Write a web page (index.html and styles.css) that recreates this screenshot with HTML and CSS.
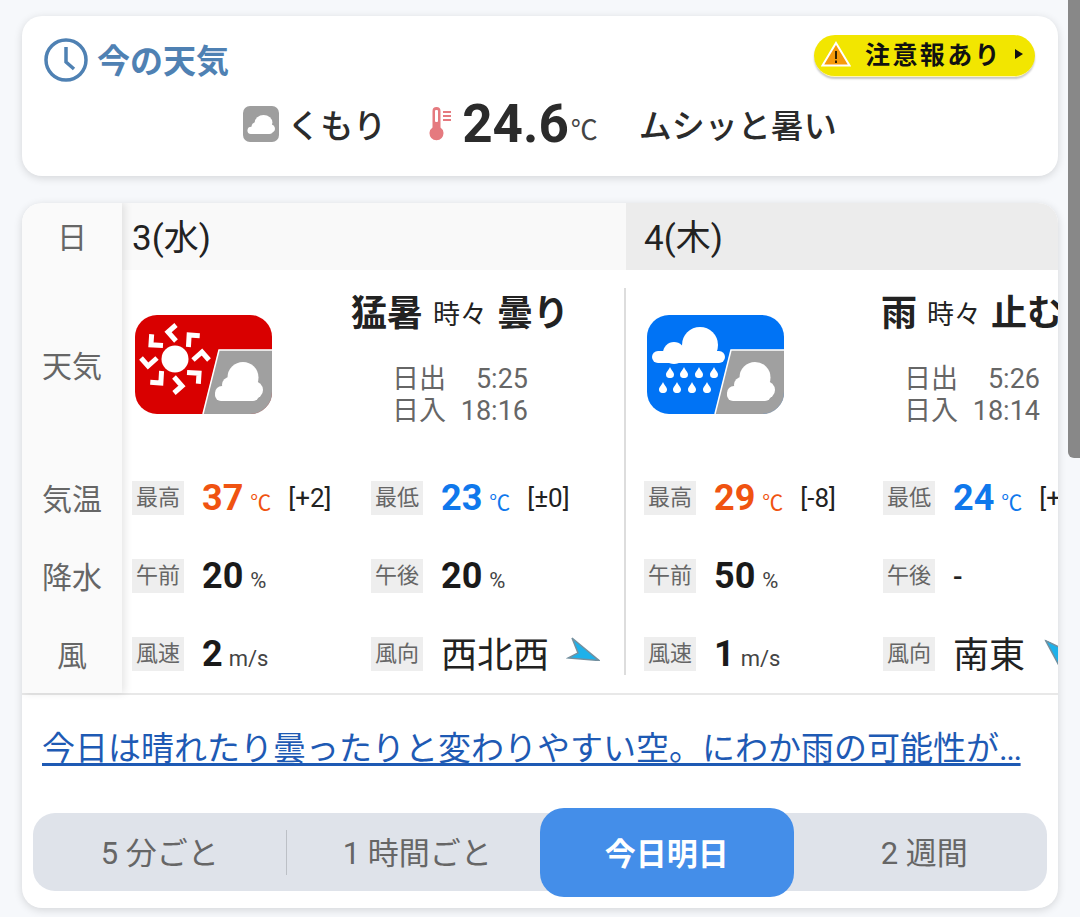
FILE: index.html

```html
<!DOCTYPE html>
<html lang="ja">
<head>
    <meta charset="UTF-8">
    <meta name="viewport" content="width=device-width, initial-scale=1.0">
    <title>今の天気</title>
    <link rel="stylesheet" href="styles.css">
</head>
<body>
    <!-- shared icon parts -->
    <svg class="icon-defs" width="0" height="0" aria-hidden="true">
        <defs>
            <symbol id="small-cloud" viewBox="0 0 49 39" preserveAspectRatio="none">
                <circle cx="29" cy="15.5" r="15.5" fill="#fff"/>
                <circle cx="40" cy="28" r="9" fill="#fff"/>
                <circle cx="16" cy="23" r="8" fill="#fff"/>
                <circle cx="8" cy="31" r="7" fill="#fff"/>
                <rect x="1" y="27" width="44" height="12" rx="6" fill="#fff"/>
            </symbol>
            <symbol id="drop" viewBox="0 0 8 11">
                <path d="M4 0C5 3 8 5 8 7.5A4 3.6 0 0 1 0 7.5C0 5 3 3 4 0Z" fill="#fff"/>
            </symbol>
            <symbol id="wind-arrow" viewBox="0 0 34 24">
                <path d="M6 1L33 23.5L2 21L12 16Z" fill="#1eb1ea" stroke="#74909f" stroke-width="1.5"/>
            </symbol>
        </defs>
    </svg>

    <div class="scrollbar"></div>

    <!-- Current weather -->
    <section class="card now">
        <div class="now-head">
            <h2 class="now-title">
                <svg class="clock" viewBox="0 0 44 44" fill="none" stroke="#4f81b3">
                    <circle cx="22" cy="22" r="20" stroke-width="3.5"/>
                    <path d="M22 9V24L30 31" stroke-width="3.5"/>
                </svg>
                <span class="now-label">今の天気</span>
            </h2>
            <a class="alert" href="#">
                <svg class="alert-mark" viewBox="0 0 30 26">
                    <path d="M15 2L28.5 24.5H1.5Z" fill="#f79a0c" stroke="#fff" stroke-width="2"/>
                    <path d="M15 10V18M15 19.5V22" stroke="#332200" stroke-width="2"/>
                </svg>
                <span class="alert-text">注意報あり</span>
                <svg class="alert-arrow" viewBox="0 0 8 10"><path d="M0 0L8 5L0 10Z" fill="#111"/></svg>
            </a>
        </div>
        <div class="now-row">
            <span class="now-cloud"><svg viewBox="0 0 49 39" preserveAspectRatio="none"><use href="#small-cloud"/></svg></span>
            <span class="now-sky">くもり</span>
            <svg class="thermo" viewBox="0 0 24 35">
                <path d="M3.5 4a4 4 0 0 1 8 0V20.5a7 7 0 1 1-8 0Z" fill="#e57a7f"/>
                <rect x="6" y="3" width="3" height="12" rx="1" fill="#fff"/>
                <path d="M14 5H22M14 9H22M14 13H22" stroke="#e57a7f" stroke-width="2"/>
            </svg>
            <span class="now-temp">24.6</span>
            <span class="now-unit">℃</span>
            <span class="now-feel">ムシッと暑い</span>
        </div>
    </section>

    <!-- Two day forecast -->
    <section class="card forecast">
        <div class="table">
            <div class="labels">
                <div class="label label-date">日</div>
                <div class="label label-sky">天気</div>
                <div class="label">気温</div>
                <div class="label">降水</div>
                <div class="label">風</div>
            </div>
            <div class="days">
                <div class="day">
                    <div class="day-head">3(水)</div>
                    <div class="day-body">
                        <div class="sky">
                            <svg class="sky-icon" viewBox="0 0 137 99">
                                <rect width="137" height="99" rx="22" fill="#d90000"/>
                                <circle cx="40" cy="44" r="13.5" fill="#fff"/>
                                <g fill="none" stroke="#fff" stroke-width="5" transform="translate(40 44)">
                                    <path d="M1 -34L-7 -27L1 -18"/>
                                    <path d="M1 -34L-7 -27L1 -18" transform="rotate(45)"/>
                                    <path d="M1 -34L-7 -27L1 -18" transform="rotate(90)"/>
                                    <path d="M1 -34L-7 -27L1 -18" transform="rotate(135)"/>
                                    <path d="M1 -34L-7 -27L1 -18" transform="rotate(180)"/>
                                    <path d="M1 -34L-7 -27L1 -18" transform="rotate(225)"/>
                                    <path d="M1 -34L-7 -27L1 -18" transform="rotate(270)"/>
                                    <path d="M1 -34L-7 -27L1 -18" transform="rotate(315)"/>
                                </g>
                                <path d="M84 35H137V77A22 22 0 0 1 115 99H68Z" fill="#a0a0a0" stroke="#a0a0a0" stroke-width="0.6"/>
                                <path d="M137 35H84L68 99" fill="none" stroke="#fff" stroke-width="1.5"/>
                                <use href="#small-cloud" x="79" y="47" width="49" height="39"/>
                            </svg>
                            <div class="sky-text">
                                <p class="sky-title"><b>猛暑</b><span>時々</span><b>曇り</b></p>
                                <p class="sun"><span>日出</span><span>5:25</span></p>
                                <p class="sun"><span>日入</span><span>18:16</span></p>
                            </div>
                        </div>
                        <div class="facts">
                            <div class="fact"><span class="chip">最高</span><span class="num hot">37</span><span class="unit deg hot">℃</span><span class="diff">[+2]</span></div>
                            <div class="fact"><span class="chip">最低</span><span class="num cold">23</span><span class="unit deg cold">℃</span><span class="diff">[±0]</span></div>
                            <div class="fact"><span class="chip">午前</span><span class="num">20</span><span class="unit">%</span></div>
                            <div class="fact"><span class="chip">午後</span><span class="num">20</span><span class="unit">%</span></div>
                            <div class="fact"><span class="chip">風速</span><span class="num">2</span><span class="unit speed">m/s</span></div>
                            <div class="fact"><span class="chip">風向</span><span class="dir">西北西</span><svg class="dir-arrow"><use href="#wind-arrow"/></svg></div>
                        </div>
                    </div>
                </div>
                <div class="day day-next">
                    <div class="day-head">4(木)</div>
                    <div class="day-body">
                        <div class="sky">
                            <svg class="sky-icon" viewBox="0 0 137 99">
                                <rect width="137" height="99" rx="22" fill="#0073f5"/>
                                <circle cx="53" cy="30" r="18" fill="#fff"/>
                                <circle cx="27" cy="38" r="11" fill="#fff"/>
                                <rect x="5" y="36" width="73" height="12" rx="6" fill="#fff"/>
                                <use href="#drop" x="19" y="52" width="8" height="11"/>
                                <use href="#drop" x="33" y="52" width="8" height="11"/>
                                <use href="#drop" x="48" y="52" width="8" height="11"/>
                                <use href="#drop" x="63" y="52" width="8" height="11"/>
                                <use href="#drop" x="12" y="67" width="8" height="11"/>
                                <use href="#drop" x="26" y="67" width="8" height="11"/>
                                <use href="#drop" x="41" y="67" width="8" height="11"/>
                                <use href="#drop" x="56" y="67" width="8" height="11"/>
                                <path d="M84 35H137V77A22 22 0 0 1 115 99H68Z" fill="#a0a0a0" stroke="#a0a0a0" stroke-width="0.6"/>
                                <path d="M137 35H84L68 99" fill="none" stroke="#fff" stroke-width="1.5"/>
                                <use href="#small-cloud" x="79" y="47" width="49" height="39"/>
                            </svg>
                            <div class="sky-text">
                                <p class="sky-title"><b>雨</b><span>時々</span><b>止む</b></p>
                                <p class="sun"><span>日出</span><span>5:26</span></p>
                                <p class="sun"><span>日入</span><span>18:14</span></p>
                            </div>
                        </div>
                        <div class="facts">
                            <div class="fact"><span class="chip">最高</span><span class="num hot">29</span><span class="unit deg hot">℃</span><span class="diff">[-8]</span></div>
                            <div class="fact"><span class="chip">最低</span><span class="num cold">24</span><span class="unit deg cold">℃</span><span class="diff">[+</span></div>
                            <div class="fact"><span class="chip">午前</span><span class="num">50</span><span class="unit">%</span></div>
                            <div class="fact"><span class="chip">午後</span><span class="dash">-</span></div>
                            <div class="fact"><span class="chip">風速</span><span class="num">1</span><span class="unit speed">m/s</span></div>
                            <div class="fact"><span class="chip">風向</span><span class="dir">南東</span><svg class="dir-arrow dir-nw"><use href="#wind-arrow"/></svg></div>
                        </div>
                    </div>
                </div>
            </div>
        </div>

        <div class="summary">
            <a href="#">今日は晴れたり曇ったりと変わりやすい空。にわか雨の可能性が<span class="dots">...</span></a>
        </div>

        <nav class="tabs">
            <a class="tab tab-line" href="#">5 分ごと</a>
            <a class="tab" href="#">1 時間ごと</a>
            <a class="tab active" href="#">今日明日</a>
            <a class="tab" href="#">2 週間</a>
        </nav>
    </section>
</body>
</html>
```

FILE: styles.css

```css
* { box-sizing: border-box; }
html, body { margin: 0; height: 917px; overflow: hidden; }
body { padding: 16px 22px 0; background: #f6f8fb; font-family: Roboto, "Noto Sans CJK JP", sans-serif; color: #222; }
p, h2 { margin: 0; }
a { color: inherit; text-decoration: none; }

.icon-defs { position: absolute; }
.scrollbar { position: absolute; top: 0; right: 0; width: 12px; height: 458px; background: #888; border-radius: 0 0 0 6px; }

.card { background: #fff; border-radius: 20px; box-shadow: 0 2px 8px rgba(0, 0, 0, 0.14); }

/* current weather */
.now { height: 160px; margin-bottom: 27px; }
.now-head { display: flex; justify-content: space-between; align-items: flex-start; padding: 19px 23px 0 22px; height: 83px; }
.now-title { display: flex; align-items: center; gap: 9px; height: 50px; font-size: 33px; font-weight: 700; color: #4f81b3; }
.now-label { margin-top: -3px; }
.clock { width: 44px; height: 44px; }
.alert { display: flex; align-items: center; height: 42px; width: 221px; border-radius: 21px; background: #f2e600; box-shadow: 0 2px 2px rgba(0, 0, 0, 0.22); border-bottom: 1px solid #fff6b0; padding: 0 0 3px 7px; }
.alert-mark { width: 30px; height: 26px; }
.alert-text { margin: -3px 0 0 14px; font-size: 25px; font-weight: 700; letter-spacing: 2.4px; color: #111; }
.alert-arrow { width: 8px; height: 10px; margin-left: 13px; }
.now-row { display: flex; justify-content: center; align-items: center; height: 50px; color: #2b2b2b; }
.now-cloud { display: flex; align-items: center; justify-content: center; width: 36px; height: 36px; border-radius: 7px; background: #9e9e9e; }
.now-cloud svg { width: 28px; height: 19px; }
.now-sky { margin-left: 8px; font-size: 33px; font-weight: 500; }
.thermo { width: 24px; height: 35px; margin-left: 43px; }
.now-temp { margin-left: 9px; font-size: 53px; font-weight: 700; }
.now-unit { margin-left: 2px; margin-top: 8px; font-size: 27px; color: #444; }
.now-feel { margin-left: 41px; font-size: 33px; font-weight: 500; }

/* forecast table */
.forecast { height: 705px; overflow: hidden; }
.table { display: flex; height: 492px; border-bottom: 2px solid #e8e8e8; }
.labels { position: relative; z-index: 1; flex: none; width: 100px; background: #fafafa; box-shadow: 3px 0 8px rgba(0, 0, 0, 0.1); display: flex; flex-direction: column; }
.label { height: 78px; display: flex; align-items: center; justify-content: center; font-size: 30px; color: #666; }
.label-date { height: 67px; padding-bottom: 4px; }
.label-sky { height: 188px; }
.days { display: flex; flex: 1; overflow: hidden; }
.day { flex: none; width: 504px; }
.day-head { height: 67px; padding: 9px 0 0 10px; font-size: 35px; line-height: 54px; background: #f9f9f9; }
.day-body { height: 387px; margin-top: 18px; padding-left: 10px; border-right: 2px solid #ddd; }
.day-next { width: 512px; }
.day-next .day-head { background: #ececec; padding-left: 18px; }
.day-next .day-body { padding-left: 18px; border-right: none; }

.sky { display: flex; height: 193px; }
.sky-icon { flex: none; width: 137px; height: 99px; margin: 27px 0 0 3px; }
.sky-text { flex: none; width: 320px; margin-left: 28px; display: flex; flex-direction: column; align-items: center; }
.sky-title { display: flex; align-items: center; gap: 10px; height: 44px; white-space: nowrap; margin-bottom: 31px; }
.sky-title b { font-size: 36px; font-weight: 700; }
.sky-title span { font-size: 27px; margin-top: 4px; }
.sun { display: flex; justify-content: space-between; width: 136px; font-size: 27px; line-height: 32px; color: #666; }

.facts { display: grid; grid-template-columns: 239px 239px; row-gap: 44px; }
.fact { display: flex; align-items: center; height: 34px; white-space: nowrap; }
.chip { flex: none; width: 52px; height: 34px; line-height: 34px; text-align: center; font-size: 22px; color: #666; background: #eee; }
.num { margin-left: 18px; font-size: 36px; font-weight: 700; color: #1a1a1a; }
.unit { margin: 8px 0 0 7px; font-size: 22px; color: #444; }
.unit.speed { margin-left: 6px; font-size: 22px; }
.unit.deg { margin-top: 6px; font-size: 21px; }
.diff { margin-left: 17px; font-size: 26px; color: #222; }
.dash { margin-left: 18px; font-size: 28px; font-weight: 500; }
.dir { margin: -5px 0 0 18px; font-size: 36px; color: #222; }
.dir-arrow { flex: none; width: 34px; height: 24px; margin: -10px 0 0 17px; }
.dir-nw { margin: 0 0 0 14px; transform: translateY(3px) rotate(202deg); }
.hot { color: #f05311; }
.cold { color: #0f78ec; }

/* summary and tabs */
.summary { height: 118px; padding: 32px 0 0 20px; font-size: 33px; line-height: 44px; white-space: nowrap; color: #1e5ab4; }
.summary a { text-decoration: underline; text-decoration-thickness: 3px; text-underline-offset: 3px; }
.dots { letter-spacing: -1.5px; }
.tabs { display: flex; height: 78px; margin: 0 11px; border-radius: 22px; background: #dfe3ea; }
.tab { position: relative; flex: none; width: 25%; display: flex; align-items: center; justify-content: center; padding-bottom: 4px; font-size: 31px; color: #666; }
.tab:nth-child(even) { padding-left: 8px; }
.tab-line::after { content: ""; position: absolute; right: 0; top: 17px; width: 1px; height: 45px; background: #bcc0c6; }
.tab.active { margin: -5px 0 -6px; padding-bottom: 2px; border-radius: 24px; background: #448ee9; color: #fff; font-weight: 700; }
```
